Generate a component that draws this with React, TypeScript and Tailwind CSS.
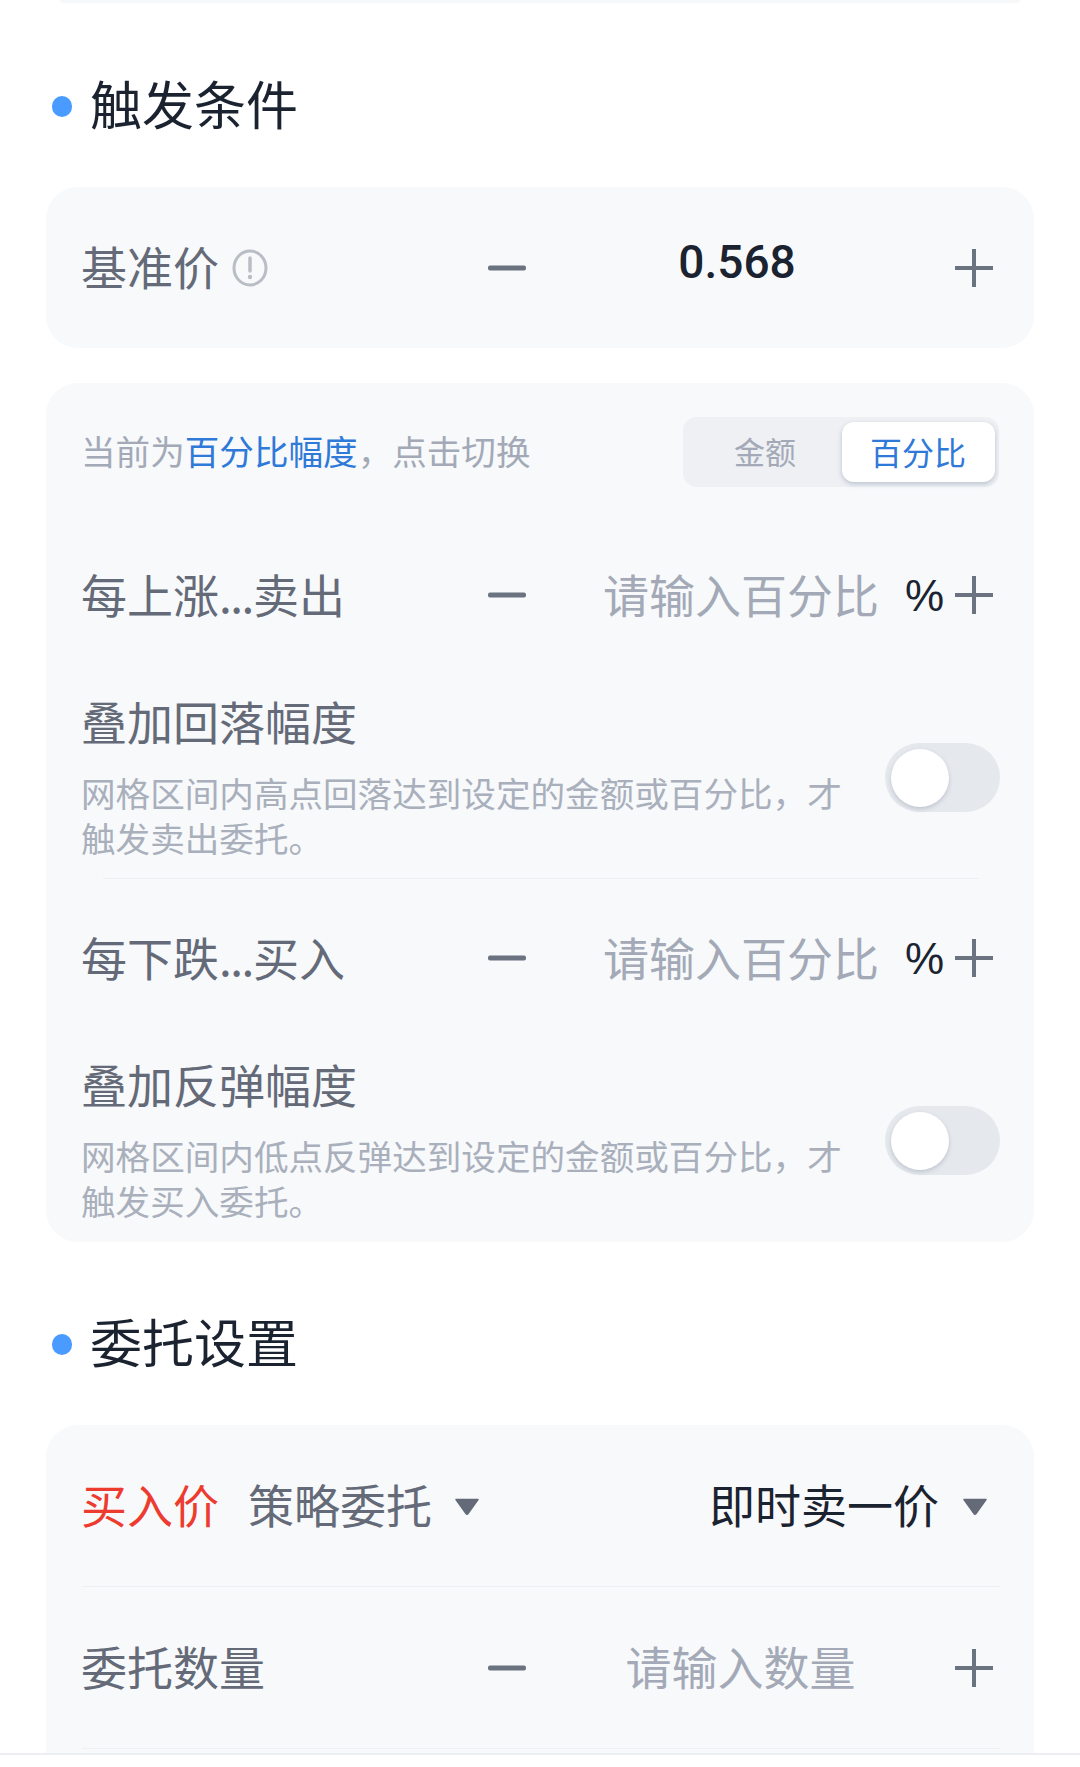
import React from 'react';

const cjk = "font-['Noto_Sans_CJK_SC','Noto_Sans',sans-serif]";

const Minus = () => (
    <svg width="38" height="6" viewBox="0 0 38 6" className="shrink-0">
        <rect x="0" y="0.5" width="38" height="5" rx="2" fill="#6b7280" />
    </svg>
);

const Plus = () => (
    <svg width="38" height="38" viewBox="0 0 38 38" className="shrink-0">
        <path d="M0 19H38M19 0V38" stroke="#6b7280" strokeWidth="4" />
    </svg>
);

const Caret = ({ color }: { color: string }) => (
    <svg width="24" height="18" viewBox="0 0 24 18" className="shrink-0 mt-[2px]">
        <path d="M1 1.5H23L13 15.5Q12 17 11 15.5Z" fill={color} stroke={color} strokeLinejoin="round" strokeWidth="1.5" />
    </svg>
);

const InfoIcon = () => (
    <svg width="36" height="38" viewBox="0 0 36 38" className="shrink-0">
        <ellipse cx="18" cy="19" rx="16" ry="17" fill="none" stroke="#b9bdc5" strokeWidth="3" />
        <path d="M18 9V22" stroke="#b9bdc5" strokeWidth="3.5" strokeLinecap="round" />
        <circle cx="18" cy="28" r="2.2" fill="#b9bdc5" />
    </svg>
);

const SectionTitle: React.FC<{ text: string; h: string }> = ({ text, h }) => (
    <div className={`flex items-center pl-[52px] pt-5 ${h}`}>
        <div className="w-5 h-[21px] mt-[2px] rounded-full bg-[#4a9bff]" />
        <div className="ml-[18px] pb-[5px] text-[52px] leading-none text-[#1b2330]">{text}</div>
    </div>
);

const StepRow: React.FC<{ before: string; after: string; placeholder: string }> = ({ before, after, placeholder }) => (
    <div className="flex items-center h-[100px] pr-[7px]">
        <div className="w-[407px] -ml-px pb-[5px] text-[46px] leading-none text-[#646a78]">
            {before}<span className="tracking-[-1.5px]">...</span>{after}
        </div>
        <Minus />
        <div className="flex-1 flex items-center justify-end">
            <span className="pb-[5px] text-[46px] leading-none text-[#a3a9b6]">{placeholder}</span>
            <span className="ml-[26px] mr-[11px] mt-[2px] text-[44px] leading-none text-[#1b2330] font-['Liberation_Sans',sans-serif]">%</span>
        </div>
        <Plus />
    </div>
);

const ToggleBlock: React.FC<{ title: string; line1: string; line2: string }> = ({ title, line1, line2 }) => (
    <div className="flex items-start justify-between mt-12">
        <div className="w-[770px] -ml-px pb-[7px]">
            <div className="h-[60px] flex items-center pb-[6px] text-[46px] leading-none text-[#646a78]">{title}</div>
            <div className="mt-[17px] text-[34.6px] leading-[45px] text-[#a9afbb]">
                <div>{line1}</div>
                <div>{line2}</div>
            </div>
        </div>
        <div className="mt-[50px] w-[115px] h-[69px] rounded-full bg-[#e5e8ed] p-[6px] shrink-0">
            <div className="w-[58px] h-[58px] rounded-full bg-white shadow-[0_2px_4px_rgba(120,130,150,0.35)]" />
        </div>
    </div>
);

export default function App() {
    return (
        <div className={`h-[1767px] w-[1080px] overflow-hidden bg-white flex flex-col ${cjk}`}>
            <div className="h-[3px] mx-[60px] rounded-b-xl bg-[#f6f8fa]" />

            <SectionTitle text="触发条件" h="h-[184px]" />

            <div className="mx-[46px] h-[161px] rounded-[32px] bg-[#f7f9fb] pl-9 pr-[41px] flex items-center">
                <div className="w-[407px] -ml-px flex items-center">
                    <span className="pb-[5px] text-[46px] leading-none text-[#646a78]">基准价</span>
                    <span className="ml-[13px]"><InfoIcon /></span>
                </div>
                <Minus />
                <div className="flex-1 text-center pr-[7px] -mt-[12px] text-[46px] leading-none font-medium text-[#1b2330] font-['Roboto',sans-serif]">0.568</div>
                <Plus />
            </div>

            <div className="mx-[46px] mt-[35px] h-[859px] rounded-[32px] bg-[#f7f9fb] pl-9 pr-[34px] pt-[34px]">
                <div className="flex items-center justify-between h-[70px]">
                    <div className="-ml-px pb-[4px] text-[34.6px] leading-none text-[#a3a9b6]">
                        当前为<span className="text-[#2f79d8]">百分比幅度</span>，点击切换
                    </div>
                    <div className="w-[316px] h-[70px] mr-px rounded-[14px] bg-[#eef0f4] flex items-center pr-1">
                        <div className="flex-1 text-center pb-[3px] pl-[5px] text-[31px] leading-none text-[#a3a9b6]">金额</div>
                        <div className="w-[153px] h-[60px] rounded-[12px] bg-white shadow-[0_2px_5px_rgba(110,125,150,0.4)] flex items-center justify-center pb-[3px] pr-[1px] text-[32px] leading-none text-[#2f79d8]">百分比</div>
                    </div>
                </div>

                <div className="mt-[58px]">
                    <StepRow before="每上涨" after="卖出" placeholder="请输入百分比" />
                </div>
                <ToggleBlock title="叠加回落幅度" line1="网格区间内高点回落达到设定的金额或百分比，才" line2="触发卖出委托。" />
                <div className="mt-[11px] ml-[21px] mr-[21px] h-px bg-[#eef0f3]" />
                <div className="mt-[29px]">
                    <StepRow before="每下跌" after="买入" placeholder="请输入百分比" />
                </div>
                <ToggleBlock title="叠加反弹幅度" line1="网格区间内低点反弹达到设定的金额或百分比，才" line2="触发买入委托。" />
            </div>

            <SectionTitle text="委托设置" h="h-[183px]" />

            <div className="mx-[46px] h-[328px] rounded-t-[32px] bg-[#f7f9fb] pl-9 pr-[34px]">
                <div className="h-[161px] flex items-center">
                    <span className="-ml-px pb-[5px] text-[46px] leading-none text-[#ee3b30]">买入价</span>
                    <span className="ml-[29px] pb-[5px] text-[46px] leading-none text-[#646a78]">策略委托</span>
                    <span className="ml-[23px]"><Caret color="#646a78" /></span>
                    <span className="ml-auto pb-[5px] text-[46px] leading-none text-[#1b2330]">即时卖一价</span>
                    <span className="ml-[24px] mr-[13px]"><Caret color="#646a78" /></span>
                </div>
                <div className="h-px bg-[#eef0f3]" />
                <div className="h-[161px] flex items-center pr-[7px]">
                    <div className="w-[407px] -ml-px pb-[5px] text-[46px] leading-none text-[#646a78]">委托数量</div>
                    <Minus />
                    <div className="flex-1 text-center pb-[5px] text-[46px] leading-none text-[#a3a9b6]">请输入数量</div>
                    <Plus />
                </div>
                <div className="h-px bg-[#eef0f3]" />
            </div>

            <div className="flex-1 bg-white border-t-2 border-[#eceef1]" />
        </div>
    );
}
